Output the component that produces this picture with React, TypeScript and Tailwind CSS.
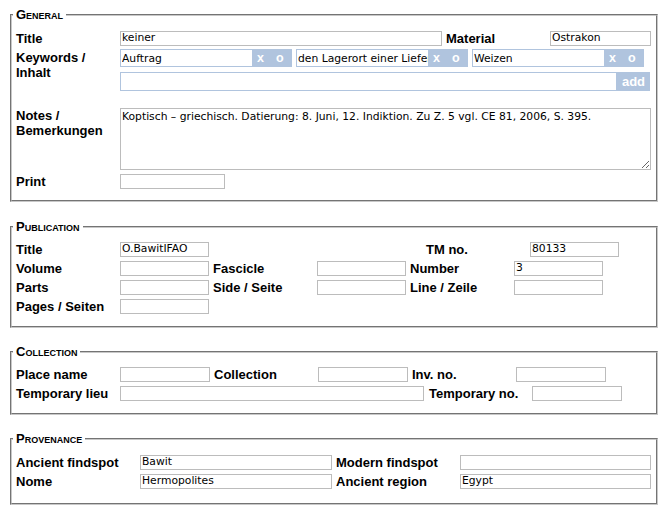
import type { ReactNode } from 'react';

const NOTES = 'Koptisch – griechisch. Datierung: 8. Juni, 12. Indiktion. Zu Z. 5 vgl. CE 81, 2006, S. 395.';

function Section({ title, className, children }: { title: string; className: string; children: ReactNode }) {
  return (
    <fieldset className={`ml-[10px] w-[648px] border-2 border-[#c8c8c8] [border-style:groove] pl-[4px] pr-[5px] ${className}`}>
      <legend className="-ml-[3px] px-[3px] text-[13px] font-bold leading-[15px] [font-variant:small-caps]">{title}</legend>
      {children}
    </fieldset>
  );
}

function Label({ children, className = 'w-[104px]' }: { children: ReactNode; className?: string }) {
  return <div className={`shrink-0 text-[13px] font-bold leading-[15px] ${className}`}>{children}</div>;
}

function Box({ className, value = '' }: { className: string; value?: string }) {
  return (
    <input
      readOnly
      value={value}
      className={`h-[15px] shrink-0 border border-[#bcbcbc] bg-white pl-[1px] font-['DejaVu_Sans',sans-serif] text-[10.75px] font-normal text-black outline-none ${className}`}
    />
  );
}

function Tag({ value }: { value: string }) {
  return (
    <div className="flex h-[18px] w-[172px] items-center bg-[#b0c4de] text-[12.5px] font-bold leading-[18px] text-white">
      <input
        readOnly
        value={value}
        className="h-full w-[133px] border border-[#b0c4de] bg-white pl-[1px] font-['DejaVu_Sans',sans-serif] text-[10.75px] font-normal text-black outline-none"
      />
      <span className="ml-[4px]">x</span>
      <span className="ml-[12px]">o</span>
    </div>
  );
}

function Row({ children }: { children: ReactNode }) {
  return <div className="flex h-[15px] items-center">{children}</div>;
}

export default function App() {
  return (
    <div className="min-h-screen bg-white pt-[7px] font-['Liberation_Sans',Arial,sans-serif] text-black">
      <Section title="General" className="pt-[9px] pb-[11px]">
        <Row>
          <Label>Title</Label>
          <Box className="w-[322px]" value="keiner" />
          <Label className="ml-[4px] w-[104px]">Material</Label>
          <Box className="w-[101px]" value="Ostrakon" />
        </Row>
        <div className="mt-[3px] flex">
          <Label className="w-[104px] pt-[1px]">Keywords /<br />Inhalt</Label>
          <div className="flex flex-col gap-[5px]">
            <div className="flex gap-[4px]">
              <Tag value="Auftrag" />
              <Tag value="den Lagerort einer Lieferung" />
              <Tag value="Weizen" />
            </div>
            <div className="flex h-[19px] w-[530px] items-center bg-[#b0c4de]">
              <input
                readOnly
                value=""
                className="h-full flex-1 border border-[#b0c4de] bg-white outline-none"
              />
              <span className="w-[33px] text-center text-[13px] font-bold leading-[19px] text-white">add</span>
            </div>
          </div>
        </div>
        <div className="mt-[17px] flex">
          <Label>Notes /<br />Bemerkungen</Label>
          <textarea
            readOnly
            value={NOTES}
            className="h-[62px] w-[531px] border border-[#bcbcbc] bg-white px-[1px] py-[1px] font-['DejaVu_Sans',sans-serif] text-[10.75px] leading-[13px] text-black outline-none"
          />
        </div>
        <div className="mt-[4px]">
          <Row>
            <Label>Print</Label>
            <Box className="w-[105px]" />
          </Row>
        </div>
      </Section>

      <Section title="Publication" className="mt-[17px] pt-[8px] pb-[12px]">
        <div className="flex flex-col gap-[4px]">
          <Row>
            <Label>Title</Label>
            <Box className="w-[89px]" value="O.BawitIFAO" />
            <Label className="ml-[217px] w-[104px]">TM no.</Label>
            <Box className="w-[89px]" value="80133" />
          </Row>
          <Row>
            <Label>Volume</Label>
            <Box className="w-[89px]" />
            <Label className="ml-[4px] w-[104px]">Fascicle</Label>
            <Box className="w-[89px]" />
            <Label className="ml-[4px] w-[104px]">Number</Label>
            <Box className="w-[89px]" value="3" />
          </Row>
          <Row>
            <Label>Parts</Label>
            <Box className="w-[89px]" />
            <Label className="ml-[4px] w-[104px]">Side / Seite</Label>
            <Box className="w-[89px]" />
            <Label className="ml-[4px] w-[104px]">Line / Zeile</Label>
            <Box className="w-[89px]" />
          </Row>
          <Row>
            <Label>Pages / Seiten</Label>
            <Box className="w-[89px]" />
          </Row>
        </div>
      </Section>

      <Section title="Collection" className="mt-[16px] pt-[8px] pb-[12px]">
        <div className="flex flex-col gap-[4px]">
          <Row>
            <Label>Place name</Label>
            <Box className="w-[90px]" />
            <Label className="ml-[4px] w-[104px]">Collection</Label>
            <Box className="w-[90px]" />
            <Label className="ml-[4px] w-[104px]">Inv. no.</Label>
            <Box className="w-[90px]" />
          </Row>
          <Row>
            <Label>Temporary lieu</Label>
            <Box className="w-[304px]" />
            <Label className="ml-[5px] w-[103px]">Temporary no.</Label>
            <Box className="w-[90px]" />
          </Row>
        </div>
      </Section>

      <Section title="Provenance" className="mt-[16px] pt-[9px] pb-[14px]">
        <div className="flex flex-col gap-[4px]">
          <Row>
            <Label className="w-[124px]">Ancient findspot</Label>
            <Box className="w-[192px]" value="Bawit" />
            <Label className="ml-[4px] w-[124px]">Modern findspot</Label>
            <Box className="w-[191px]" />
          </Row>
          <Row>
            <Label className="w-[124px]">Nome</Label>
            <Box className="w-[192px]" value="Hermopolites" />
            <Label className="ml-[4px] w-[124px]">Ancient region</Label>
            <Box className="w-[191px]" value="Egypt" />
          </Row>
        </div>
      </Section>
    </div>
  );
}
